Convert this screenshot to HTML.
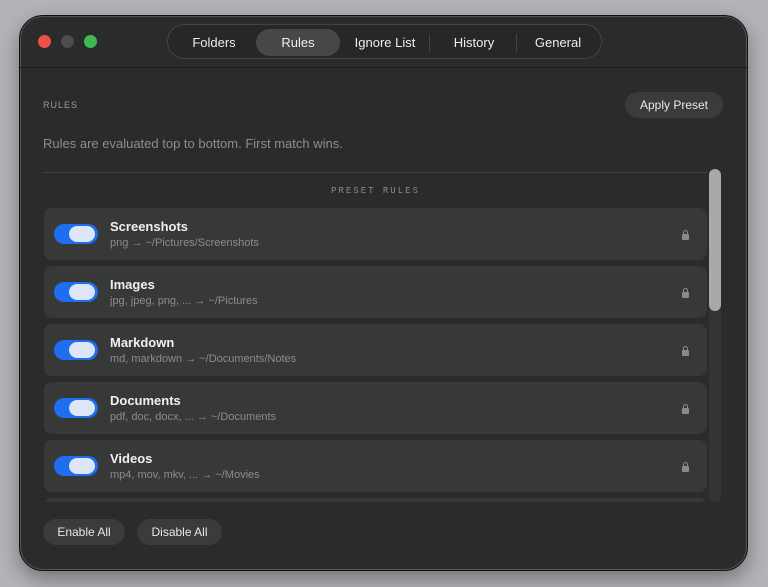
<!DOCTYPE html>
<html><head><meta charset="utf-8"><style>
*{box-sizing:border-box;margin:0;padding:0}
body{width:768px;height:587px;background:#b3b3b8;font-family:"Liberation Sans",sans-serif;position:relative;overflow:hidden}
.win{position:absolute;left:19px;top:15px;width:729px;height:556px;background:#2a2b2b;border-radius:24px;border:1px solid #111;box-shadow:0 0 0 1px #555 inset,0 8px 20px rgba(0,0,0,.35)}
.tb{position:absolute;left:0;top:0;width:100%;height:52px;border-bottom:1px solid #1d1e1e}
.dot{position:absolute;top:19px;width:13px;height:13px;border-radius:50%}
.tabs{position:absolute;left:147px;top:8px;width:435px;height:35px;border:1px solid #444;border-radius:18px;background:#262727}
.tab{position:absolute;top:4px;height:27px;line-height:27px;color:#eee;font-size:13px;text-align:center}
.sel{background:#464747;border-radius:14px}
.sep{position:absolute;top:9px;width:1px;height:18px;background:#444}
.abs{position:absolute}
.row{position:absolute;left:24px;width:663px;height:52px;background:#373838;border-radius:8px}
.tg{position:absolute;left:10px;top:16px;width:44px;height:20px;border-radius:10px;background:#1f6ef0}
.tg:after{content:"";position:absolute;right:3px;top:2px;width:26px;height:16px;border-radius:8px;background:#dde6f6}
.t{position:absolute;left:66px;top:11px;color:#f0f0f0;font-size:13px;font-weight:bold}
.s{position:absolute;left:66px;top:29px;color:#8b8c8c;font-size:11px}
.lk{position:absolute;left:638px;top:26px;width:7px;height:6px;background:#8a8a8a;border-radius:1px}
.lk:before{content:"";position:absolute;left:1px;top:-4px;width:5px;height:5px;border:1px solid #8a8a8a;border-bottom:none;border-radius:3px 3px 0 0;box-sizing:border-box}
.btn{position:absolute;height:26px;line-height:26px;background:#3a3b3b;border-radius:13px;color:#e8e8e8;font-size:12px;text-align:center}
</style></head><body>
<div class="win">
 <div class="tb">
  <div class="dot" style="left:18px;background:#ee4f4a"></div>
  <div class="dot" style="left:41px;background:#4b4c4c"></div>
  <div class="dot" style="left:64px;background:#3fb950"></div>
  <div class="tabs">
   <div class="tab" style="left:4px;width:84px">Folders</div>
   <div class="tab sel" style="left:88px;width:84px">Rules</div>
   <div class="tab" style="left:176px;width:82px">Ignore List</div>
   <div class="sep" style="left:261px"></div>
   <div class="tab" style="left:264px;width:84px">History</div>
   <div class="sep" style="left:348px"></div>
   <div class="tab" style="left:349px;width:82px">General</div>
  </div>
 </div>
 <div class="abs" style="left:23px;top:84px;color:#9a9b9b;font-size:9px;letter-spacing:1px">RULES</div>
 <div class="btn" style="left:605px;top:76px;width:98px">Apply Preset</div>
 <div class="abs" style="left:23px;top:120px;color:#8d8e8e;font-size:13px">Rules are evaluated top to bottom. First match wins.</div>
 <div class="abs" style="left:23px;top:156px;width:664px;height:1px;background:#3f4040"></div>
 <div class="abs" style="left:24px;top:170px;width:663px;text-align:center;color:#8a8b8b;font-size:9px;letter-spacing:2px;font-family:'Liberation Mono',monospace">PRESET RULES</div>
 <div class="abs" style="left:0;top:150px;width:729px;height:336px;overflow:hidden">
  <div class="row" style="top:42px"><div class="tg"></div><div class="t">Screenshots</div><div class="s">png → ~/Pictures/Screenshots</div><div class="lk"></div></div>
  <div class="row" style="top:100px"><div class="tg"></div><div class="t">Images</div><div class="s">jpg, jpeg, png, ... → ~/Pictures</div><div class="lk"></div></div>
  <div class="row" style="top:158px"><div class="tg"></div><div class="t">Markdown</div><div class="s">md, markdown → ~/Documents/Notes</div><div class="lk"></div></div>
  <div class="row" style="top:216px"><div class="tg"></div><div class="t">Documents</div><div class="s">pdf, doc, docx, ... → ~/Documents</div><div class="lk"></div></div>
  <div class="row" style="top:274px"><div class="tg"></div><div class="t">Videos</div><div class="s">mp4, mov, mkv, ... → ~/Movies</div><div class="lk"></div></div>
  <div class="row" style="top:332px"></div>
 </div>
 <div class="abs" style="left:689px;top:153px;width:12px;height:333px;background:#333434;border-radius:6px"></div>
 <div class="abs" style="left:689px;top:153px;width:12px;height:142px;background:#a9a9a9;border-radius:6px"></div>
 <div class="btn" style="left:23px;top:503px;width:82px">Enable All</div>
 <div class="btn" style="left:117px;top:503px;width:85px">Disable All</div>
</div>
</body></html>
